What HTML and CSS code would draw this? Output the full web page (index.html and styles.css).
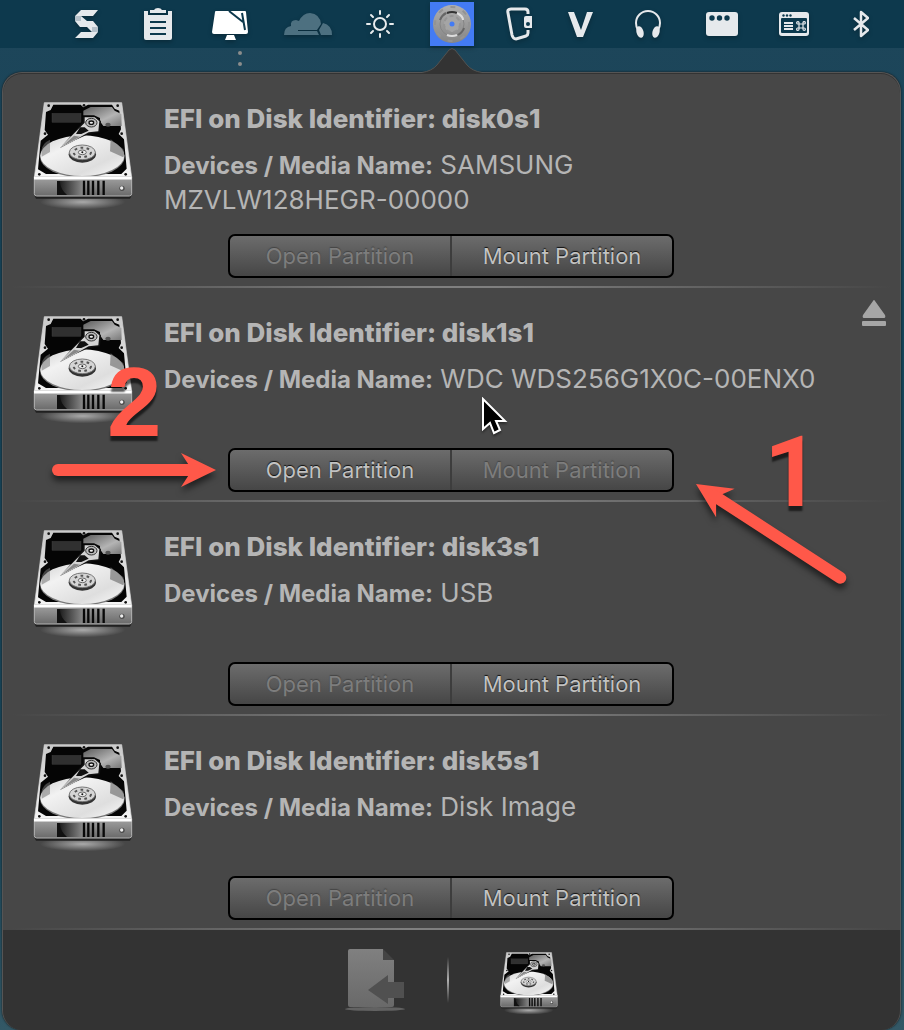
FILE: index.html
```html
<!DOCTYPE html>
<html lang="en">
<head>
<meta charset="utf-8">
<meta name="viewport" content="width=device-width, initial-scale=1">
<title>EFI Partitions</title>
<link rel="stylesheet" href="styles.css">
</head>
<body>
<svg class="defs" aria-hidden="true">
  <defs>
    <linearGradient id="plate" x1="0" y1="0" x2="0" y2="1"><stop offset="0" stop-color="#c9c9c9"/><stop offset="1" stop-color="#f4f4f4"/></linearGradient>
    <linearGradient id="platter" x1="0" y1="0" x2="1" y2="1"><stop offset="0" stop-color="#cfcfcf"/><stop offset=".3" stop-color="#f2f2f2"/><stop offset=".7" stop-color="#dedede"/><stop offset="1" stop-color="#fafafa"/></linearGradient>
    <linearGradient id="front" x1="0" y1="0" x2="0" y2="1"><stop offset="0" stop-color="#a2a2a2"/><stop offset="1" stop-color="#6a6a6a"/></linearGradient>
    <linearGradient id="vent" x1="0" y1="0" x2="1" y2="0"><stop offset="0" stop-color="#111"/><stop offset="1" stop-color="#888"/></linearGradient>
    <linearGradient id="metal" x1="0" y1="0" x2="1" y2="1"><stop offset="0" stop-color="#5c5c5c"/><stop offset=".6" stop-color="#b4b4b4"/><stop offset="1" stop-color="#777"/></linearGradient>
    <radialGradient id="glow"><stop offset="0" stop-color="#aaa"/><stop offset="1" stop-color="#aaa" stop-opacity="0"/></radialGradient>
    <linearGradient id="sheet" x1="0" y1="0" x2="0" y2="1"><stop offset="0" stop-color="#808080"/><stop offset="1" stop-color="#696969"/></linearGradient>
    <linearGradient id="disc" x1="0" y1="0" x2="0" y2="1"><stop offset="0" stop-color="#b0b0b0"/><stop offset="1" stop-color="#858585"/></linearGradient>
    <symbol id="hdd" viewBox="36 30 306 330">
      <ellipse cx="188" cy="336" rx="128" ry="22" fill="url(#glow)"/>
      <path d="M42 314h294l-6 12H48z" fill="#202020"/>
      <path d="M73 38H305L335 262H43z" fill="url(#plate)" stroke="#ddd" stroke-width="2"/>
      <path d="M100 44H182L190 52 204 44H276L284 56 298 62 303 118 296 132 312 148 320 236 304 252H78L54 238 62 152 84 134 74 120 78 66 92 60z" fill="#050505"/>
      <path d="M190 62 212 51H276L284 62 304 72 305 108H250L240 94V84L222 76H190z" fill="url(#metal)"/>
      <rect x="96" y="70" width="87" height="27" fill="#303030" stroke="#484848"/>
      <ellipse cx="264" cy="104" rx="8" ry="6" fill="#555"/>
      <ellipse cx="187" cy="201" rx="127" ry="61" fill="#777"/>
      <ellipse cx="187" cy="197" rx="126" ry="61" fill="url(#platter)"/>
      <path d="M272 148l38 30q4 16 0 24L270 184z" fill="#777" opacity=".7"/>
      <path d="M64 182q2-22 26-33v37l-25 14z" fill="#777" opacity=".55"/>
      <path d="M120 174 167 122 188 96V80h38l17 13-3 34-34 5-40 18z" fill="#111"/>
      <path d="M119 174 170 122 194 98V82h30l14 12-3 30-29 3-42 24z" fill="#d4d4d4"/>
      <path d="M168 132 180 112 194 112 206 122 184 132z" fill="#111"/><path d="M128 168l34-31 18 3z" fill="#888"/>
      <ellipse cx="214" cy="98" rx="17" ry="13" fill="#bbb" stroke="#333" stroke-width="3"/>
      <ellipse cx="214" cy="98" rx="7" ry="5" fill="#eee" stroke="#111" stroke-width="4"/>
      <ellipse cx="187" cy="193" rx="41" ry="25" fill="#333"/><ellipse cx="187" cy="187" rx="39" ry="22" fill="#d5d5d5" stroke="#777" stroke-width="3"/>
      <ellipse cx="187" cy="187" rx="26" ry="14" fill="none" stroke="#555" stroke-width="6" stroke-dasharray="8 10"/>
      <ellipse cx="187" cy="187" rx="12" ry="7" fill="#eee" stroke="#666" stroke-width="3"/><circle cx="187" cy="187" r="3" fill="#111"/>
      <g fill="#111"><circle cx="86" cy="47" r="4"/><circle cx="192" cy="46" r="4"/><circle cx="293" cy="47" r="4"/><circle cx="75" cy="131" r="4"/><circle cx="305" cy="131" r="4"/><circle cx="58" cy="253" r="4"/><circle cx="317" cy="253" r="4"/></g>
      <path d="M43 260H335V311Q335 318 328 318H50Q43 318 43 311z" fill="url(#front)" stroke="#b5b5b5" stroke-width="3"/>
      <path d="M42 264H335" stroke="#fff" stroke-width="9"/>
      <path d="M111 273h77v42h-56q-18-15-21-42z" fill="url(#vent)"/>
      <path d="M111 273v42h30q-20-17-22-42z" fill="#111"/>
      <path d="M192 272v43M205 272v43M219 272v43M235 272v43M251 272v43" stroke="#080808" stroke-width="7"/>
      <circle cx="306" cy="295" r="8" fill="#4c4c4c"/><circle cx="305" cy="294" r="5" fill="#eee"/>
    </symbol>
  </defs>
</svg>

<div class="screen">
  <header class="menubar">
    <svg width="24" height="30" viewBox="0 0 24 30"><path d="M6 1H23L18 7H6L12 12H18L23 18V23L18 29H0L6 23H17L12 18H5L0 12V7z" fill="#e6e9ec"/><path d="M0 7H6V12H0zM17 18H23V23H17z" fill="#b6c1ca"/></svg>
    <svg width="28" height="32" viewBox="0 0 28 32"><path d="M0 3H4V7H24V3H28V30Q28 32 26 32H2Q0 32 0 30z" fill="#e6e9ec"/><path d="M6 5V2H10Q11 0 14 0T18 2H22V5z" fill="#e6e9ec"/><path d="M6 14H22M6 20H22M6 26H22" stroke="#0d394d" stroke-width="2"/></svg>
    <svg width="36" height="32" viewBox="0 0 36 32"><path d="M4 3H33Q34 3 34 4L36 24Q36 26 34 26H2Q0 26 0 24L3 4Q3 3 4 3zM15 27H22L24 32H13z" fill="#fff"/><path d="M17 3 31 14M30 5 33 22" stroke="#0d394d" stroke-width="2"/></svg>
    <svg width="48" height="24" viewBox="0 0 48 24"><path d="M0 23Q0 15 7 14Q6 8 12 8L15 9Q19 1 26 1Q36 2 37 12L33 18 30 18H14V19H33L35 23zM35 18 39 11Q48 13 48 23H37z" fill="#4d7080"/></svg>
    <svg width="28" height="28" viewBox="0 0 28 28" fill="none" stroke="#e8ecee" stroke-width="2" stroke-linecap="round"><circle cx="14" cy="14" r="6"/><path d="M14 1V4M14 24V27M1 14H4M24 14H27M5 5 7 7M21 21 23 23M5 23 7 21M21 7 23 5"/></svg>
    <svg width="44" height="44" viewBox="0 0 44 44"><path d="M0 0H44V44H0z" fill="#437bf4"/><circle cx="22" cy="22" r="19" fill="url(#disc)"/><circle cx="22" cy="22" r="17" fill="none" stroke="#939393" stroke-dasharray="5 8" stroke-width="2"/><circle cx="22" cy="22" r="12" fill="none" stroke="#858585"/><circle cx="22" cy="22" r="8" fill="#a5a5a5" stroke="#959595" stroke-dasharray="4 3" stroke-width="2"/><path d="M17 11Q22 9 27 11" fill="none" stroke="#333" stroke-width="2"/><path d="M27 11Q33 14 33 18M17 33Q22 35 27 33" fill="none" stroke="#ddd" stroke-width="2"/><path d="M10 18Q12 13 16 11M28 33Q33 30 34 26" fill="none" stroke="#666" stroke-width="2"/><circle cx="22" cy="22" r="2.5" fill="#437bf4"/></svg>
    <svg width="26" height="34" viewBox="0 0 26 34"><path d="M22 7V5Q22 2 19 2H5Q1 2 2 6L6 28Q7 32 10 32L20 29Q22 28 22 26V23" fill="none" stroke="#e6e9ec" stroke-width="3"/><path d="M20 9H26V21H20Q18 21 18 19V11Q18 9 20 9z" fill="#e6e9ec"/><circle cx="22" cy="17" r="2" fill="#0d394d"/></svg>
    <svg width="25" height="26" viewBox="0 0 25 26"><path d="M0 1H6L13 19 19 1H25L15 26H9z" fill="#e6e9ec"/></svg>
    <svg width="26" height="28" viewBox="0 0 26 28"><path d="M3 20Q1 17 1 13A12 12 0 0 1 25 13Q25 17 23 20" fill="none" stroke="#e6e9ec" stroke-width="2"/><ellipse cx="5" cy="22" rx="3.500" ry="6" transform="rotate(-15 5 22)" fill="#e6e9ec"/><ellipse cx="21" cy="22" rx="3.500" ry="6" transform="rotate(15 21 22)" fill="#e6e9ec"/></svg>
    <svg width="32" height="24" viewBox="0 0 32 24"><rect width="32" height="24" rx="3" fill="#e6e9ec"/><g fill="#0d394d"><circle cx="6" cy="6" r="2.7"/><circle cx="13.500" cy="6" r="2.700"/><circle cx="21" cy="6" r="2.700"/></g></svg>
    <svg width="30" height="24" viewBox="0 0 30 24"><rect width="30" height="24" rx="3" fill="#e6e9ec"/><rect x="2" y="6" width="26" height="15" rx="1" fill="#0d394d"/><g fill="#0d394d"><circle cx="4.500" cy="3.500" r="1.200"/><circle cx="8" cy="3.500" r="1.200"/><circle cx="11.500" cy="3.500" r="1.200"/></g><path d="M5 11H14M5 14H14M5 17H14" stroke="#e6e9ec" stroke-width="1.800"/><path d="M20 12V16H24V12zM20 12H18.500A1.200 1.200 0 1 1 20 10.500zM24 12V10.500A1.200 1.200 0 1 1 25.200 12zM20 16V17.200A1.200 1.200 0 1 1 18.500 16zM24 16H25.200A1.200 1.200 0 1 1 24 17.200z" fill="none" stroke="#e6e9ec" stroke-width="1.200"/></svg>
    <svg width="16" height="28" viewBox="0 0 16 28"><path d="M1 8 15 20 8 26V2L15 8 1 20" fill="none" stroke="#e6e9ec" stroke-width="2.500" stroke-linejoin="round"/></svg>
  </header>

  <div class="callout">
    <svg class="dots" width="6" height="18" viewBox="0 0 6 18" fill="#8b8d8c"><circle cx="3" cy="4" r="2"/><circle cx="3" cy="15" r="2"/></svg>
    <svg class="pointer" width="60" height="26" viewBox="0 0 60 26"><path d="M0 24.500Q10 23 15 17L27 2Q30-1 33 2L45 17Q50 23 60 24.500V26H0z" fill="#333"/><path d="M0 24.500Q10 23 15 17L27 2Q30-1 33 2L45 17Q50 23 60 24.500" fill="none" stroke="#525250"/></svg>
  </div>

  <main class="panel">
    <section class="disk">
      <svg class="disk-icon"><use href="#hdd"/></svg>
      <div class="info"><h2>EFI on Disk Identifier: disk0s1</h2><p><strong>Devices / Media Name:</strong> SAMSUNG <span class="model">MZVLW128HEGR-00000</span></p></div>
      <div class="actions"><button type="button" disabled>Open Partition</button><button type="button">Mount Partition</button></div>
    </section>
    <section class="disk">
      <svg class="disk-icon"><use href="#hdd"/></svg>
      <div class="info"><h2>EFI on Disk Identifier: disk1s1</h2><p><strong>Devices / Media Name:</strong> WDC <span class="model">WDS256G1X0C-00ENX0</span></p></div>
      <button class="eject" type="button" aria-label="Eject"><svg width="24" height="26" viewBox="0 0 24 26" fill="#a6a6a6"><path d="M11 1Q12-1 13 1L23 15Q24 18 22 18H2Q0 18 1 15z"/><rect y="21" width="24" height="5" rx="1"/></svg></button>
      <div class="actions"><button type="button">Open Partition</button><button type="button" disabled>Mount Partition</button></div>
    </section>
    <section class="disk">
      <svg class="disk-icon"><use href="#hdd"/></svg>
      <div class="info"><h2>EFI on Disk Identifier: disk3s1</h2><p><strong>Devices / Media Name:</strong> USB</p></div>
      <div class="actions"><button type="button" disabled>Open Partition</button><button type="button">Mount Partition</button></div>
    </section>
    <section class="disk">
      <svg class="disk-icon"><use href="#hdd"/></svg>
      <div class="info"><h2>EFI on Disk Identifier: disk5s1</h2><p><strong>Devices / Media Name:</strong> Disk Image</p></div>
      <div class="actions"><button type="button" disabled>Open Partition</button><button type="button">Mount Partition</button></div>
    </section>
    <footer class="toolbar">
      <button type="button" aria-label="Quit"><svg width="60" height="64" viewBox="0 0 60 64"><ellipse cx="30" cy="61" rx="30" ry="2" fill="#626262"/><path d="M5 1H38V12H49V57Q49 59 47 59H5Q3 59 3 57V3Q3 1 5 1z" fill="url(#sheet)"/><path d="M38 1 49 12H38z" fill="#444"/><path d="M23 42 43 27V34H59V50H43V56z" fill="#505050"/></svg></button>
      <span class="divider"></span>
      <button class="disks" type="button" aria-label="Disks"><svg width="60" height="64"><use href="#hdd"/></svg></button>
    </footer>
  </main>

  <div class="marks">
    <svg class="arrows" width="904" height="1030" viewBox="0 0 904 1030">
      <g fill="#ff5849" stroke="#ff5849">
        <g transform="translate(216 470)"><path d="M0 0-35-17-24 0-35 17z" stroke="none"/><path d="M-22 0H-158" stroke-width="12" stroke-linecap="round"/></g>
        <g transform="translate(696 484) rotate(33)"><path d="M0 0 35-17 24 0 35 17z" stroke="none"/><path d="M22 0H172" stroke-width="12" stroke-linecap="round"/></g>
      </g>
    </svg>
    <span class="number two">2</span>
    <span class="number one">1</span>
    <svg class="cursor" width="28" height="42" viewBox="-1 -1 28 42"><path d="M1 1V31L8 25 12 35 18 32 14 23H23z" stroke="#fff" stroke-width="2"/></svg>
  </div>
</div>
</body>
</html>
```
FILE: styles.css
```css
* { box-sizing: border-box; }
body {
  margin: 0;
  background: #174459;
  color: #b5b5b5;
  font-family: Inter, "Liberation Sans", sans-serif;
}
.defs { position: absolute; width: 0; height: 0; }
.screen { position: relative; overflow: hidden; background: linear-gradient(#1e465a, #174459 30%, #1a4659 80%, #335866); }
.menubar {
  display: grid;
  grid-template-columns: 69fr 68fr 72fr 82fr 64fr 76fr 62fr 67fr 71fr 73fr 74fr 51fr;
  align-items: center;
  height: 48px;
  padding-left: 75px;
  background: #0d394d;
}
.menubar svg { display: block; filter: drop-shadow(0 2px 2px rgba(0, 0, 0, .25)); }
.callout { position: relative; height: 24px; }
.dots { position: absolute; left: 237px; top: 1px; }
.pointer { position: absolute; left: 422px; top: 0; z-index: 1; }
.panel {
  margin: 0 3px 0 2px;
  padding-top: 1px;
  overflow: hidden;
  border: 1px solid #555;
  border-bottom: 0;
  border-radius: 20px;
  background: #474747;
  box-shadow: 0 0 2px #111, inset 0 1px #333;
}
.disk {
  position: relative;
  display: grid;
  grid-template-columns: 102px 1fr;
  grid-template-rows: 1fr auto;
  column-gap: 30px;
  min-height: 214px;
  padding: 26px 30px 10px 29px;
}
.disk::after {
  content: "";
  position: absolute;
  inset: auto 0 0;
  height: 2px;
  background: linear-gradient(90deg, transparent 1%, #808080 45%, #808080 55%, transparent 99%);
}
.disk-icon { width: 102px; height: 110px; }
.info { padding-right: 30px; line-height: 34px; font-size: 26px; }
h2 { margin: 2px 0 12px; font-size: 26px; font-weight: 800; }
p { margin: 0; }
strong { font-size: 24px; font-weight: 700; }
.model { white-space: nowrap; }
.actions {
  grid-column: 1 / -1;
  display: flex;
  justify-self: center;
  width: 446px;
  height: 44px;
  overflow: hidden;
  border: 2px solid #000;
  border-radius: 7px;
  background: linear-gradient(#6c6c6c, #464646);
}
button { padding: 0; border: 0; background: none; color: inherit; font-family: inherit; }
.actions button { flex: 1; font-size: 22px; color: #c2c2c2; text-shadow: 0 -1px 1px #111; }
.actions button + button { border-left: 2px solid #3d3d3d; }
.actions button:disabled { color: #7d7d7d; text-shadow: 0 -1px 1px #444; }
.eject { position: absolute; right: 14px; top: 12px; }
.eject svg, .toolbar svg { display: block; }
.toolbar {
  display: flex;
  align-items: center;
  justify-content: center;
  height: 100px;
  background: #333;
}
.disks { padding-top: 6px; }
.divider {
  width: 2px;
  height: 46px;
  margin: 0 50px 0 42px;
  background: linear-gradient(transparent, #b0b0b0, transparent);
}
.marks { position: absolute; inset: 0; pointer-events: none; }
.arrows { position: absolute; left: 0; top: 0; filter: drop-shadow(0 5px 3px rgba(0, 0, 0, .55)); }
.number {
  position: absolute;
  color: #ff5849;
  font: 700 98px/98px "Liberation Sans", Arial, sans-serif;
  text-shadow: 0 5px 2px rgba(0, 0, 0, .6);
}
.two { left: 107px; top: 353px; }
.one { left: 764px; top: 424px; font-family: Roboto, sans-serif; }
.cursor { position: absolute; left: 481px; top: 397px; filter: drop-shadow(0 2px 1px rgba(0, 0, 0, .4)); }
```
